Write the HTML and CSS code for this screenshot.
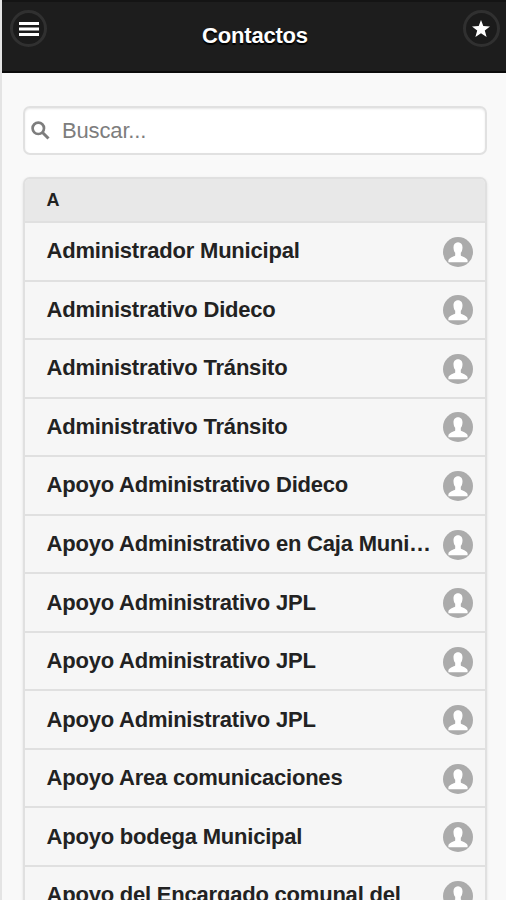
FILE: index.html
```html
<!DOCTYPE html>
<html lang="es">
<head>
<meta charset="utf-8">
<title>Contactos</title>
<link rel="stylesheet" href="styles.css">
</head>
<body>
<svg class="defs" width="0" height="0" aria-hidden="true">
  <symbol id="person" viewBox="0 0 30 30">
    <circle cx="15" cy="15" r="15" fill="#ababab"/>
    <path d="M15 5.200C12 5.200 10.400 7.500 10.500 10.400C10.600 12.800 11.200 14.600 12.200 15.800V18.400C11.500 19.600 5.600 20.400 5.400 23.600V25.200H24.600V23.600C24.400 20.400 18.500 19.600 17.800 18.400V15.800C18.800 14.600 19.400 12.800 19.500 10.400C19.600 7.500 18 5.200 15 5.200Z" fill="#fff"/>
  </symbol>
</svg>
<div class="page">
  <header class="bar">
    <button class="round" aria-label="Menu"><svg width="20" height="16" viewBox="0 0 20 16"><path d="M0 2.500h20M0 8h20M0 13.500h20" stroke="#fff" stroke-width="3"/></svg></button>
    <h1 class="title">Contactos</h1>
    <button class="round star" aria-label="Favoritos"><svg width="18" height="17" viewBox="0 0 18 17"><path d="M9 0l2.300 6.100 6.700.3-5.200 4.200L14.600 17 9 13.300 3.400 17l1.800-6.400L0 6.400l6.700-.3z" fill="#fff"/></svg></button>
  </header>
  <main class="content">
    <label class="search">
      <svg width="19" height="19" viewBox="0 0 19 19"><circle cx="7.300" cy="7.300" r="5.700" fill="none" stroke="#7d7d7d" stroke-width="2.700"/><path d="M11.500 11.500l6 6" stroke="#7d7d7d" stroke-width="3"/></svg>
      <span>Buscar...</span>
    </label>
    <ul class="list">
      <li class="divider">A</li>
      <li class="row"><span>Administrador Municipal</span><svg class="icon"><use href="#person"/></svg></li>
      <li class="row"><span>Administrativo Dideco</span><svg class="icon"><use href="#person"/></svg></li>
      <li class="row"><span>Administrativo Tránsito</span><svg class="icon"><use href="#person"/></svg></li>
      <li class="row"><span>Administrativo Tránsito</span><svg class="icon"><use href="#person"/></svg></li>
      <li class="row"><span>Apoyo Administrativo Dideco</span><svg class="icon"><use href="#person"/></svg></li>
      <li class="row"><span>Apoyo Administrativo en Caja Muni…</span><svg class="icon"><use href="#person"/></svg></li>
      <li class="row"><span>Apoyo Administrativo JPL</span><svg class="icon"><use href="#person"/></svg></li>
      <li class="row"><span>Apoyo Administrativo JPL</span><svg class="icon"><use href="#person"/></svg></li>
      <li class="row"><span>Apoyo Administrativo JPL</span><svg class="icon"><use href="#person"/></svg></li>
      <li class="row"><span>Apoyo Area comunicaciones</span><svg class="icon"><use href="#person"/></svg></li>
      <li class="row"><span>Apoyo bodega Municipal</span><svg class="icon"><use href="#person"/></svg></li>
      <li class="row"><span>Apoyo del Encargado comunal del</span><svg class="icon"><use href="#person"/></svg></li>
    </ul>
  </main>
</div>
</body>
</html>
```
FILE: styles.css
```css
* { box-sizing: border-box; }
html, body { margin: 0; height: 900px; overflow: hidden; }
body { font-family: "Liberation Sans", Arial, sans-serif; background: #f9f9f9; color: #222; }
.defs { display: block; height: 0; }
.page { height: 900px; overflow: hidden; border-left: 2px solid #e4e4e4; }
.bar {
  display: flex; justify-content: space-between; align-items: flex-start;
  height: 73px; padding: 10px 6px 0 8px;
  background: #1d1d1d; border-top: 2px solid #141414; border-bottom: 2px solid #0b0b0b;
}
.round {
  display: flex; align-items: center; justify-content: center;
  width: 37px; height: 37px; margin-top: -2px; padding: 0;
  border: 3px solid #303030; border-radius: 50%; background: #1b1b1b;
}
.star { padding-right: 1px; }
.title {
  margin: 0; padding-top: 11px; font-size: 22px; line-height: 25px; letter-spacing: -0.2px;
  font-weight: bold; color: #fff; text-shadow: 0 2px 1px #000;
}
.content { padding: 33px 19px 0 21px; }
.search {
  display: flex; align-items: center; gap: 12px; height: 49px; padding-left: 6px;
  border: 2px solid #e1e1e1; border-radius: 7px; background: #fff;
  box-shadow: inset 0 1px 2px #e8e8e8;
  font-size: 22px; letter-spacing: -0.15px; color: #7d7d7d;
}
.list {
  margin: 22px 0 0; padding: 0; list-style: none;
  border: 2px solid #e0e0e0; border-radius: 7px 7px 0 0; overflow: hidden;
  background: #f6f6f6; box-shadow: 0 1px 3px rgba(0,0,0,.1);
}
.divider {
  height: 44px; padding: 0 21.5px; line-height: 43px; background: #e8e8e8;
  font-size: 18px; font-weight: bold; border-bottom: 2px solid #e0e0e0;
}
.row {
  display: flex; align-items: center; justify-content: space-between;
  height: 58.55px; padding: 0 12px 0 21.5px; border-bottom: 2px solid #e0e0e0;
  font-size: 22px; font-weight: bold; letter-spacing: -0.21px; white-space: nowrap;
}
.icon { width: 30px; height: 30px; flex: none; position: relative; top: .5px; }
```
